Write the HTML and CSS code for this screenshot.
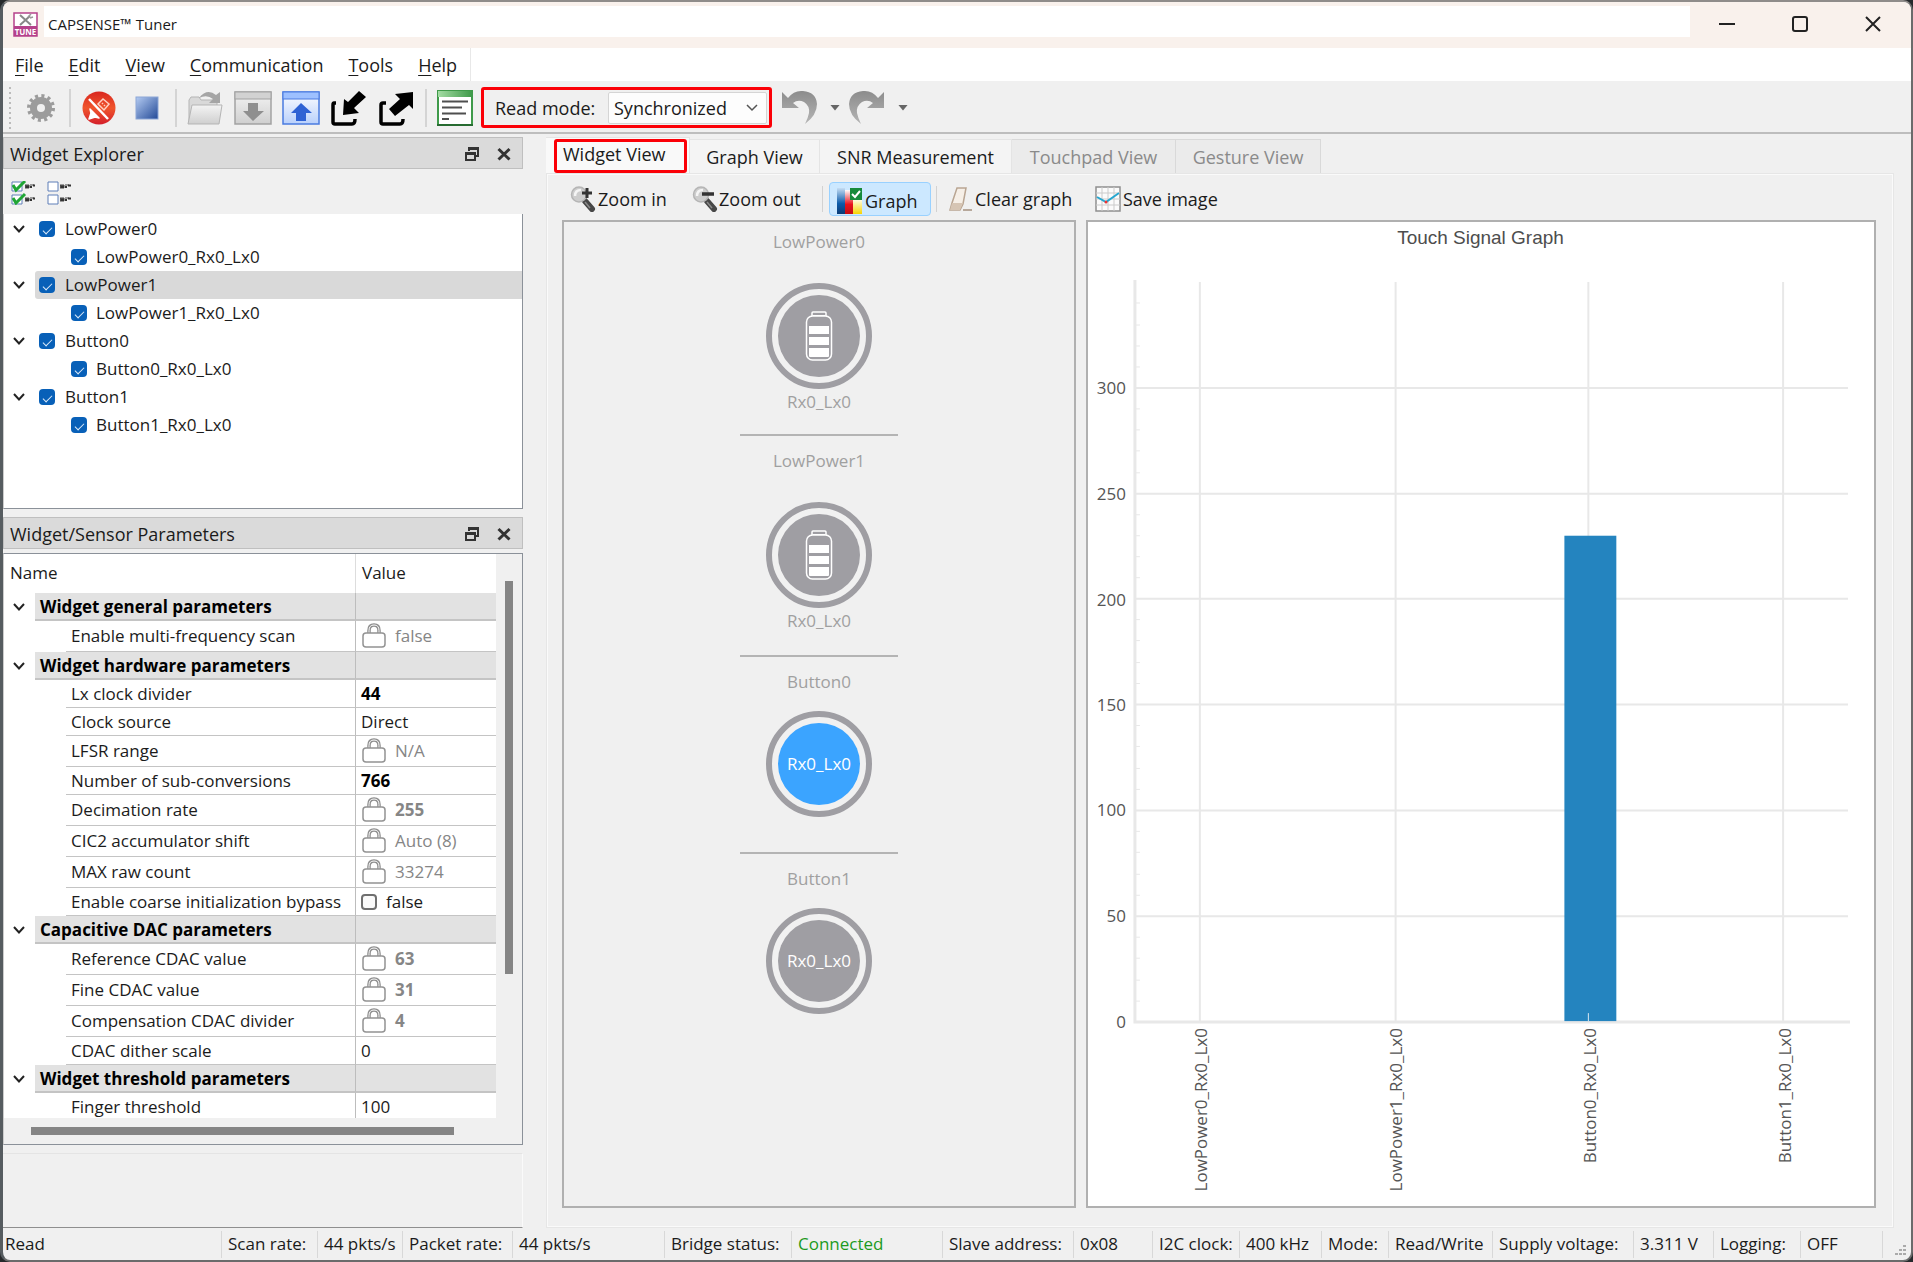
FILE: index.html
```html
<!DOCTYPE html>
<html lang="en">
<head>
<meta charset="utf-8">
<title>CAPSENSE™ Tuner</title>
<link rel="stylesheet" href="styles.css">
</head>
<body>
<svg class="defs" aria-hidden="true">
  <defs>
    <linearGradient id="g-red" x1="0" y1="0" x2="0" y2="1"><stop offset="0" stop-color="#d9261f"/><stop offset=".5" stop-color="#f0552c"/><stop offset="1" stop-color="#d41f2b"/></linearGradient>
    <linearGradient id="g-blue" x1="0" y1="0" x2="1" y2="1"><stop offset="0" stop-color="#b4cbf2"/><stop offset="1" stop-color="#234a97"/></linearGradient>
    <linearGradient id="g-win" x1="0" y1="0" x2="0" y2="1"><stop offset="0" stop-color="#fff"/><stop offset="1" stop-color="#b9d0fb"/></linearGradient>
    <linearGradient id="g-gray" x1="0" y1="0" x2="0" y2="1"><stop offset="0" stop-color="#f4f4f4"/><stop offset="1" stop-color="#cfcfcf"/></linearGradient>
    <linearGradient id="g-dark" x1="0" y1="0" x2="0" y2="1"><stop offset="0" stop-color="#8c8c8c"/><stop offset="1" stop-color="#b5b5b5"/></linearGradient>
    <linearGradient id="g-green" x1="0" y1="0" x2="1" y2="0"><stop offset="0" stop-color="#a3dca3"/><stop offset="1" stop-color="#3f9a4a"/></linearGradient>
    <linearGradient id="g-navy" x1="0" y1="0" x2="0" y2="1"><stop offset="0" stop-color="#c5ddf3"/><stop offset=".6" stop-color="#0b5aa9"/><stop offset="1" stop-color="#0a3a74"/></linearGradient>
    <linearGradient id="g-crimson" x1="0" y1="0" x2="0" y2="1"><stop offset="0" stop-color="#fff"/><stop offset=".6" stop-color="#e8121b"/><stop offset="1" stop-color="#c00d15"/></linearGradient>
    <linearGradient id="g-yellow" x1="0" y1="0" x2="0" y2="1"><stop offset="0" stop-color="#fffbe0"/><stop offset="1" stop-color="#f7d400"/></linearGradient>
    <symbol id="chev" viewBox="0 0 14 10"><path d="M2 2l5 5.500L12 2" fill="none" stroke="#222" stroke-width="2"/></symbol>
    <symbol id="lock" viewBox="0 0 24 26"><path d="M7 11V7.500Q7 2 12 2t5 5.500V11" fill="none" stroke="#8e8e8e" stroke-width="3.500"/><path d="M7 11V7.500Q7 2 12 2t5 5.500V11" fill="none" stroke="#fafafa" stroke-width="1"/><rect x="1" y="10" width="22" height="14" rx="3" fill="#fff" stroke="#939393" stroke-width="1.500"/></symbol>
    <symbol id="float" viewBox="0 0 16 16"><path d="M5 5V2h9v8h-3" fill="none" stroke="#333" stroke-width="2"/><path d="M4 2.500h11" stroke="#333" stroke-width="3"/><rect x="2" y="7" width="9" height="7" fill="none" stroke="#333" stroke-width="2"/><path d="M1 7.500h11" stroke="#333" stroke-width="3"/></symbol>
    <symbol id="close" viewBox="0 0 16 16"><path d="M2.500 3l11 10.500M13.500 3l-11 10.500" stroke="#333" stroke-width="3"/></symbol>
    <symbol id="battery" viewBox="0 0 28 50"><path d="M7 5V2q0-1 1-1h12q1 0 1 1v3" fill="none" stroke="#fff" stroke-width="1.500"/><path d="M8 4.500h12" stroke="#fff"/><rect x="1.500" y="5" width="25" height="44" rx="6" fill="none" stroke="#fff" stroke-width="1.500"/><path d="M4 15h20v8H4zM4 26h20v8H4zM4 37h20v8q0 1-1 1H5q-1 0-1-1z" fill="#fff"/></symbol>
    <symbol id="glass" viewBox="0 0 26 26"><path d="M15 15l7 8" stroke="#474747" stroke-width="6" stroke-linecap="round"/><path d="M15 16l5 6" stroke="#8a8a8a" stroke-width="1.500"/><circle cx="9" cy="8.500" r="7.500" fill="#cdcdcd" stroke="#b5b5b5" stroke-width="1.500"/><path d="M5 10q0-6 6-6" fill="none" stroke="#f4f4f4" stroke-width="2.500"/></symbol>
    <symbol id="undo" viewBox="0 0 36 36"><path d="M1 2v16h17l-6-5q5-4 11-1 6 4 5 11-1 5-4 11 12-9 12-20Q35 2 22 1 13 0 7 8z" fill="url(#g-dark)"/></symbol>
    <symbol id="items" viewBox="0 0 12 24"><path d="M0 5h4v3H0zM5 5h4M0 18h4v3H0zM5 18h4" fill="#555" stroke="#444" stroke-width="1"/><path d="M1 7h3m1 0h2m1-1.500h3M1 20h3m1 0h2m1-1.500h3" stroke="#333" stroke-width="2"/></symbol>
  </defs>
</svg>
<div class="window">
  <header class="titlebar">
    <svg class="app-icon" width="25" height="25" viewBox="0 0 25 25"><rect x="1" y="1" width="23" height="23" fill="#fff" stroke="#b5418b" stroke-width="1.500"/><rect x="1" y="14" width="23" height="10" fill="#b5418b"/><path d="M7 3l11 10M17 4L7 13" stroke="#888" stroke-width="2"/><path d="M15 5l3-3M17 6l3-1" stroke="#999" stroke-width="1.500"/><text x="12.500" y="23" text-anchor="middle" class="app-mark">TUNE</text></svg>
    <h1 class="title">CAPSENSE™ Tuner</h1>
    <div class="win-controls">
      <button aria-label="Minimize"><svg width="18" height="18"><path d="M1 9h16" stroke="#222" stroke-width="2"/></svg></button>
      <button aria-label="Maximize"><svg width="18" height="18"><rect x="2" y="2" width="14" height="14" rx="2" fill="none" stroke="#222" stroke-width="2"/></svg></button>
      <button aria-label="Close"><svg width="18" height="18"><path d="M2 2l14 14M16 2L2 16" stroke="#222" stroke-width="2"/></svg></button>
    </div>
  </header>
  <nav class="menubar">
    <button><u>F</u>ile</button><button><u>E</u>dit</button><button><u>V</u>iew</button><button><u>C</u>ommunication</button><button><u>T</u>ools</button><button><u>H</u>elp</button>
  </nav>
  <div class="toolbar">
    <span class="grip"></span>
    <button class="tool" aria-label="Settings"><svg width="30" height="30" viewBox="0 0 30 30"><circle cx="15" cy="15" r="7.500" fill="none" stroke="#9c9c9c" stroke-width="7"/><circle cx="15" cy="15" r="12" fill="none" stroke="#9c9c9c" stroke-width="4" stroke-dasharray="3 3.283"/></svg></button>
    <span class="sep"></span>
    <button class="tool" aria-label="Disconnect"><svg width="34" height="34" viewBox="0 0 34 34"><circle cx="17" cy="17" r="16.500" fill="url(#g-red)"/><path d="M8 18l9 9-4-1-3 1-3 1 1-3 1-3z" fill="#fff" stroke="#fff" stroke-width="1.500" stroke-linejoin="round"/><path d="M16 13l5-5 6 5-5 6z" fill="none" stroke="#ffcfc2" stroke-width="1.500"/><path d="M20 12l1 1M22 14l1 1" stroke="#ffcfc2" stroke-width="1.500"/><path d="M7 8l19 20" stroke="#fff" stroke-width="2.500"/></svg></button>
    <button class="tool" aria-label="Stop"><svg width="24" height="24"><rect x="1" y="1" width="22" height="22" fill="url(#g-blue)" stroke="#8ba6d6"/></svg></button>
    <span class="sep"></span>
    <button class="tool" aria-label="Open"><svg width="36" height="36" viewBox="0 0 36 36"><path d="M2 33V10l2-3h8l2 3h16v6" fill="#d9d9d9" stroke="#b5b5b5"/><path d="M1 34l4-19h30l-3 19z" fill="url(#g-gray)" stroke="#b5b5b5"/><path d="M12 8q8-10 17-3l4-3v11H22l4-4q-6-5-14-1z" fill="#a5a5a5"/></svg></button>
    <button class="tool" aria-label="Import"><svg width="38" height="34" viewBox="0 0 38 34"><rect x="1" y="1" width="36" height="32" fill="url(#g-gray)" stroke="#a2a2a2" stroke-width="1.500"/><rect x="1" y="1" width="36" height="7" fill="#d2d2d2" stroke="#a2a2a2"/><path d="M14 12h10v8h6L19 30 9 20h5z" fill="#8f8f8f"/></svg></button>
    <button class="tool" aria-label="Export"><svg width="38" height="34" viewBox="0 0 38 34"><rect x="1" y="1" width="36" height="32" fill="url(#g-win)" stroke="#4a7be0" stroke-width="1.500"/><rect x="1" y="1" width="36" height="7" fill="#9dc0ff" stroke="#4a7be0"/><path d="M14 30h10v-8h6L19 12 9 22h5z" fill="#2f62d4"/></svg></button>
    <button class="tool" aria-label="Read from device"><svg width="36" height="36" viewBox="0 0 36 36"><path d="M5 13H3q-1 0-1 2v17q0 2 2 2h17q3 0 3-5" fill="none" stroke="#000" stroke-width="3.500"/><path d="M28 1l7 6-12 11 5 5-16 2 1-16 4 3z" fill="#000"/></svg></button>
    <button class="tool" aria-label="Write to device"><svg width="36" height="36" viewBox="0 0 36 36"><path d="M7 13H4q-2 0-2 2v17q0 2 2 2h17q3 0 3-5" fill="none" stroke="#000" stroke-width="3.500"/><path d="M34 2v17l-4-4-14 11-6-7 11-10-5-5z" fill="#000"/></svg></button>
    <span class="sep"></span>
    <button class="tool" aria-label="Log"><svg width="36" height="36" viewBox="0 0 36 36"><rect x="1" y="1" width="34" height="34" fill="#fff" stroke="#3f9a4a" stroke-width="2"/><rect x="1" y="1" width="34" height="6" fill="url(#g-green)"/><path d="M5 11.500h26M5 17.500h20M5 23.500h24M5 29h7" stroke="#4f4f4f" stroke-width="2"/><path d="M0 35h36" stroke="#276b31" stroke-width="2"/></svg></button>
    <div class="readmode">
      <label for="mode">Read mode:</label>
      <div class="select"><select id="mode"><option>Synchronized</option></select><svg width="14" height="10" viewBox="0 0 14 10"><path d="M2 2l5 5 5-5" fill="none" stroke="#555" stroke-width="1.500"/></svg></div>
    </div>
    <button class="hist" aria-label="Undo"><svg width="36" height="36"><use href="#undo"/></svg></button>
    <button class="drop" aria-label="Undo list"></button>
    <button class="hist" aria-label="Redo"><svg width="36" height="36"><use href="#undo" transform="matrix(-1 0 0 1 36 0)"/></svg></button>
    <button class="drop" aria-label="Redo list"></button>
  </div>
  <div class="workspace">
    <aside class="docks">
      <section class="dock">
        <header class="dock-head"><h2>Widget Explorer</h2><button aria-label="Float"><svg width="16" height="16"><use href="#float"/></svg></button><button aria-label="Close panel"><svg width="16" height="16"><use href="#close"/></svg></button></header>
        <div class="checks">
          <button aria-label="Check all"><svg width="24" height="24" viewBox="0 0 24 24"><path d="M1 1h10v9H1zM1 14h10v9H1z" fill="#fff" stroke="#5f7fb8"/><path d="M2 4l3 5 9-9M2 17l3 5 9-9" fill="none" stroke="#1fa535" stroke-width="3"/><use href="#items" x="14" y="-1" width="12" height="24"/></svg></button>
          <button aria-label="Uncheck all"><svg width="24" height="24" viewBox="0 0 24 24"><path d="M1 1h10v9H1zM1 14h10v9H1z" fill="#fff" stroke="#5f7fb8"/><use href="#items" x="13" y="-1" width="12" height="24"/></svg></button>
        </div>
        <ul class="tree">
          <li><div class="node"><button aria-label="Collapse"><svg width="14" height="10"><use href="#chev"/></svg></button><label><input type="checkbox" checked>LowPower0</label></div><ul><li><label><input type="checkbox" checked>LowPower0_Rx0_Lx0</label></li></ul></li>
          <li><div class="node selected"><button aria-label="Collapse"><svg width="14" height="10"><use href="#chev"/></svg></button><label><input type="checkbox" checked>LowPower1</label></div><ul><li><label><input type="checkbox" checked>LowPower1_Rx0_Lx0</label></li></ul></li>
          <li><div class="node"><button aria-label="Collapse"><svg width="14" height="10"><use href="#chev"/></svg></button><label><input type="checkbox" checked>Button0</label></div><ul><li><label><input type="checkbox" checked>Button0_Rx0_Lx0</label></li></ul></li>
          <li><div class="node"><button aria-label="Collapse"><svg width="14" height="10"><use href="#chev"/></svg></button><label><input type="checkbox" checked>Button1</label></div><ul><li><label><input type="checkbox" checked>Button1_Rx0_Lx0</label></li></ul></li>
        </ul>
      </section>
      <section class="dock">
        <header class="dock-head"><h2>Widget/Sensor Parameters</h2><button aria-label="Float"><svg width="16" height="16"><use href="#float"/></svg></button><button aria-label="Close panel"><svg width="16" height="16"><use href="#close"/></svg></button></header>
        <div class="params">
          <div class="params-view">
            <table>
              <colgroup><col class="c-toggle"><col class="c-indent"><col><col class="c-value"></colgroup>
              <thead><tr><th colspan="3">Name</th><th>Value</th></tr></thead>
              <tbody>
                <tr class="group"><td><button aria-label="Collapse"><svg width="14" height="10"><use href="#chev"/></svg></button></td><th colspan="2">Widget general parameters</th><td></td></tr>
                <tr class="locked"><td></td><td></td><td>Enable multi-frequency scan</td><td><svg width="24" height="26"><use href="#lock"/></svg>false</td></tr>
                <tr class="group"><td><button aria-label="Collapse"><svg width="14" height="10"><use href="#chev"/></svg></button></td><th colspan="2">Widget hardware parameters</th><td></td></tr>
                <tr><td></td><td></td><td>Lx clock divider</td><td><b>44</b></td></tr>
                <tr><td></td><td></td><td>Clock source</td><td>Direct</td></tr>
                <tr class="locked"><td></td><td></td><td>LFSR range</td><td><svg width="24" height="26"><use href="#lock"/></svg>N/A</td></tr>
                <tr><td></td><td></td><td>Number of sub-conversions</td><td><b>766</b></td></tr>
                <tr class="locked"><td></td><td></td><td>Decimation rate</td><td><svg width="24" height="26"><use href="#lock"/></svg><b>255</b></td></tr>
                <tr class="locked"><td></td><td></td><td>CIC2 accumulator shift</td><td><svg width="24" height="26"><use href="#lock"/></svg>Auto (8)</td></tr>
                <tr class="locked"><td></td><td></td><td>MAX raw count</td><td><svg width="24" height="26"><use href="#lock"/></svg>33274</td></tr>
                <tr><td></td><td></td><td>Enable coarse initialization bypass</td><td><label><input type="checkbox">false</label></td></tr>
                <tr class="group"><td><button aria-label="Collapse"><svg width="14" height="10"><use href="#chev"/></svg></button></td><th colspan="2">Capacitive DAC parameters</th><td></td></tr>
                <tr class="locked"><td></td><td></td><td>Reference CDAC value</td><td><svg width="24" height="26"><use href="#lock"/></svg><b>63</b></td></tr>
                <tr class="locked"><td></td><td></td><td>Fine CDAC value</td><td><svg width="24" height="26"><use href="#lock"/></svg><b>31</b></td></tr>
                <tr class="locked"><td></td><td></td><td>Compensation CDAC divider</td><td><svg width="24" height="26"><use href="#lock"/></svg><b>4</b></td></tr>
                <tr><td></td><td></td><td>CDAC dither scale</td><td>0</td></tr>
                <tr class="group"><td><button aria-label="Collapse"><svg width="14" height="10"><use href="#chev"/></svg></button></td><th colspan="2">Widget threshold parameters</th><td></td></tr>
                <tr><td></td><td></td><td>Finger threshold</td><td>100</td></tr>
              </tbody>
            </table>
          </div>
          <div class="vscroll"><span></span></div>
          <div class="hscroll"><span></span></div>
        </div>
      </section>
      <div class="dock-rest"></div>
    </aside>
    <main class="views">
      <div class="tabs" role="tablist">
        <button role="tab" class="tab active" aria-selected="true"><span>Widget View</span></button>
        <button role="tab" class="tab graph-tab">Graph View</button>
        <button role="tab" class="tab snr-tab">SNR Measurement</button>
        <button role="tab" class="tab touch-tab" disabled>Touchpad View</button>
        <button role="tab" class="tab gesture-tab" disabled>Gesture View</button>
      </div>
      <div class="pane">
        <div class="viewbar">
          <button class="zin"><svg width="26" height="26" viewBox="0 0 26 26"><use href="#glass"/><path d="M12 7h10M17 2v10" stroke="#333" stroke-width="3"/></svg>Zoom in</button>
          <button class="zout"><svg width="26" height="26" viewBox="0 0 26 26"><use href="#glass"/><path d="M10 8h12" stroke="#333" stroke-width="3.500"/></svg>Zoom out</button>
          <span class="vsep"></span>
          <button class="toggle" aria-pressed="true"><svg width="26" height="26" viewBox="0 0 26 26"><rect width="8" height="26" fill="url(#g-navy)"/><rect x="8" y="2" width="8" height="24" fill="url(#g-crimson)"/><rect x="16" y="12" width="9" height="14" fill="url(#g-yellow)"/><rect x="13" width="12" height="12" fill="#178a3b"/><path d="M15 6l3 3 5-6" fill="none" stroke="#fff" stroke-width="2"/></svg>Graph</button>
          <span class="vsep"></span>
          <button class="clear"><svg width="25" height="26" viewBox="0 0 25 26"><path d="M9 2h9l-3 16-3 6H2l2-7z" fill="#f6efe7" stroke="#b9a592" stroke-width="1.500"/><path d="M4 17h11l-3 7H2z" fill="#d6c5b4"/><path d="M15 24h9" stroke="#a5917f" stroke-width="1.500"/></svg>Clear graph</button>
          <button class="save"><svg width="26" height="26" viewBox="0 0 26 26"><rect x="1" y="1" width="24" height="24" fill="#fbfbfb" stroke="#8f8f8f" stroke-width="1.500"/><path d="M7 1v24M13 1v24M19 1v24M1 7h24M1 13h24M1 19h24" stroke="#cbcbcb"/><path d="M2 11l9 5 13-9" fill="none" stroke="#25a6cf" stroke-width="2"/><circle cx="11" cy="16" r="1.500" fill="#e33"/></svg>Save image</button>
        </div>
        <div class="panels">
          <section class="sensors">
            <article class="widget lp"><h3>LowPower0</h3><div class="ring"><div class="disc"><svg width="28" height="50"><use href="#battery"/></svg></div></div><p>Rx0_Lx0</p></article>
            <article class="widget lp"><h3>LowPower1</h3><div class="ring"><div class="disc"><svg width="28" height="50"><use href="#battery"/></svg></div></div><p>Rx0_Lx0</p></article>
            <article class="widget"><h3>Button0</h3><div class="ring"><div class="disc on">Rx0_Lx0</div></div></article>
            <article class="widget"><h3>Button1</h3><div class="ring"><div class="disc">Rx0_Lx0</div></div></article>
          </section>
          <section class="chart">
            <svg viewBox="1088 222 787 983" role="img" aria-label="Touch Signal Graph">
              <text class="chart-title" x="1481" y="243" text-anchor="middle">Touch Signal Graph</text>
              <g stroke="#e8e8e8" fill="none" stroke-width="2">
                <path d="M1200 281V1022M1396 281V1022M1589 281V1022M1784 281V1022"/>
                <path d="M1135 387H1849M1135 493H1849M1135 598H1849M1135 704H1849M1135 810H1849M1135 916H1849"/>
                <path d="M1135 302h5M1135 324h5M1135 345h5M1135 366h5M1135 408h5M1135 429h5M1135 450h5M1135 472h5M1135 514h5M1135 535h5M1135 556h5M1135 577h5M1135 619h5M1135 640h5M1135 662h5M1135 683h5M1135 725h5M1135 746h5M1135 768h5M1135 789h5M1135 831h5M1135 852h5M1135 874h5M1135 895h5M1135 937h5M1135 958h5M1135 980h5M1135 1001h5" stroke-width="1"/>
                <path d="M1135 279V1022H1851" stroke-width="3"/>
              </g>
              <rect x="1565" y="535" width="52" height="486" fill="#2484bf"/>
              <path d="M1589 1013v8" stroke="#d8e8f3"/>
              <g class="axis" text-anchor="end">
                <text x="1126" y="393">300</text><text x="1126" y="499">250</text><text x="1126" y="605">200</text><text x="1126" y="710">150</text><text x="1126" y="816">100</text><text x="1126" y="922">50</text><text x="1126" y="1028">0</text>
                <text transform="translate(1207 1028) rotate(-90)">LowPower0_Rx0_Lx0</text>
                <text transform="translate(1402 1028) rotate(-90)">LowPower1_Rx0_Lx0</text>
                <text transform="translate(1597 1028) rotate(-90)">Button0_Rx0_Lx0</text>
                <text transform="translate(1792 1028) rotate(-90)">Button1_Rx0_Lx0</text>
              </g>
            </svg>
          </section>
        </div>
      </div>
    </main>
  </div>
  <footer class="status">
    <span>Read</span><span>Scan rate:</span><span>44 pkts/s</span><span>Packet rate:</span><span>44 pkts/s</span><span>Bridge status:</span><span class="ok">Connected</span><span>Slave address:</span><span>0x08</span><span>I2C clock:</span><span>400 kHz</span><span>Mode:</span><span>Read/Write</span><span>Supply voltage:</span><span>3.311 V</span><span>Logging:</span><span>OFF</span><span><svg class="size-grip" width="12" height="12"><path d="M8 1h3M4 5h3M8 5h3M0 9h3M4 9h3M8 9h3" stroke="#aaa" stroke-width="2"/></svg></span>
  </footer>
</div>
</body>
</html>
```
FILE: styles.css
```css
* { box-sizing: border-box; }
body { margin: 0; background: #26292b; color: #1b1b1b; font: 17px/24px "Open Sans", "Noto Sans", sans-serif; }
h1, h2, h3, p, ul { margin: 0; padding: 0; font-size: inherit; font-weight: 400; list-style: none; }
button, select, input { font: inherit; color: inherit; margin: 0; }
button { border: 0; padding: 0; background: none; white-space: nowrap; }
svg { display: block; flex: none; }
.defs { position: absolute; width: 0; height: 0; }

.window { min-height: 100vh; display: flex; flex-direction: column; background: #f0f0f0; border: 2px solid #6b6b6b; border-top-color: #8f8c8a; border-left: 3px solid #565c60; border-radius: 10px; overflow: hidden; }

.titlebar { flex: none; display: flex; align-items: flex-start; height: 46px; padding: 0 2px 0 10px; background: #f9f1ec; }
.app-icon { margin-top: 10px; }
.app-mark { font: bold 8px "Open Sans", sans-serif; fill: #fff; }
.title { flex: 1; height: 31px; margin: 4px 0 0 6px; padding-left: 4px; background: #fff; font-size: 15px; line-height: 37px; }
.win-controls { display: flex; }
.win-controls button { width: 73px; height: 43px; display: grid; place-items: center; }

.menubar { flex: none; display: flex; height: 33px; background: #fff; font-size: 18px; }
.menubar button { padding: 0 13px 0 12px; }
.menubar button:last-child { border-right: 1px solid #e8e8e8; }
.menubar u { text-underline-offset: 3px; }

.toolbar { flex: none; display: flex; align-items: center; height: 53px; padding: 4px 0 2px 6px; border-bottom: 2px solid #bdbdbd; font-size: 18px; }
.grip { width: 2px; height: 42px; margin-right: 6px; background: repeating-linear-gradient(#bbb 0 2px, #f0f0f0 2px 5px); }
.tool { width: 48px; height: 40px; display: grid; place-items: center; }
.sep { width: 2px; height: 38px; margin: 0 4px; background: #d4d4d4; }
.readmode { display: flex; align-items: center; width: 291px; height: 41px; margin-left: 2px; padding: 0 2px 0 11px; border: 3px solid #fb0007; border-radius: 3px; }
.readmode label { flex: 1; white-space: nowrap; }
.select { position: relative; width: 159px; height: 32px; }
.select select { width: 100%; height: 100%; padding: 0 5px; appearance: none; background: #fdfdfd; border: 1px solid #d5d5d5; border-radius: 2px; }
.select svg { position: absolute; right: 8px; top: 11px; pointer-events: none; }
.hist { margin-left: 9px; }
.drop { width: 10px; height: 6px; margin-left: 13px; background: #666; clip-path: polygon(0 0, 100% 0, 50% 100%); }

.workspace { flex: 1; display: flex; }
.docks { flex: none; width: 520px; display: flex; flex-direction: column; gap: 8px; padding-top: 3px; }
.dock-head { display: flex; align-items: center; gap: 16px; height: 32px; padding: 1px 10px 0 6px; background: #dadada; border: 1px solid #bfbfbf; font-size: 18px; }
.dock-head h2 { flex: 1; }
.checks { display: flex; gap: 12px; height: 45px; padding: 12px 8px; }
.tree { height: 295px; background: #fff; border: 1px solid #8b9199; border-top: 0; border-left-color: #ccc; padding-top: 1px; }
.node { display: flex; height: 28px; padding-left: 8px; }
.node button { width: 14px; }
.node label { flex: 1; display: flex; align-items: center; gap: 10px; margin-left: 9px; padding-left: 4px; }
.node.selected label { background: #d9d9d9; border-radius: 3px 0 0 3px; }
.tree ul label { display: flex; align-items: center; gap: 9px; height: 28px; padding-left: 67px; }
input[type="checkbox"] { appearance: none; flex: none; width: 16px; height: 16px; border: 2px solid #6f6f6f; border-radius: 4px; background: #fafafa; }
input[type="checkbox"]:checked { border: 0; background: #0860b8; display: grid; place-items: center; }
input[type="checkbox"]:checked::after { content: ""; width: 8px; height: 4px; border: solid #dceaf8; border-width: 0 0 1px 1px; transform: rotate(-45deg); }
.node button, td button { display: grid; place-items: center; }

.params { display: grid; grid-template: 564px 26px / 1fr 26px; margin-top: 4px; border: 1px solid #8b9199; border-left-color: #ccc; }
.params-view { overflow: hidden; background: #fff; }
table { width: 100%; table-layout: fixed; border-collapse: separate; border-spacing: 0; }
.c-toggle { width: 31px; } .c-indent { width: 31px; } .c-value { width: 141px; }
th, td { padding: 0; height: 28px; text-align: left; font-weight: 400; white-space: nowrap; }
thead th { height: 39px; padding: 0 0 2px 6px; }
thead th + th { border-left: 1px solid #ddd; }
tbody td:nth-last-child(-n+2), tbody th { border-bottom: 1px solid #c4c4c4; padding-left: 5px; }
tbody td:last-child { border-left: 1px solid #bdbdbd; }
tbody td:first-child { padding-left: 8px; border: 0; }
.group th, .group td:last-child { background: #e2e2e2; border-bottom: 2px solid #c4c4c4; font-weight: 700; color: #000; }
.group th { padding-top: 2px; }
b { color: #000; }
.locked td { height: 31px; }
.locked td:last-child, .locked b { color: #868686; }
.locked svg { float: left; margin: -1px 9px 0 1px; }
td label { display: flex; align-items: center; gap: 9px; }
.vscroll { padding: 27px 9px 0 9px; }
.vscroll span { display: block; height: 393px; background: #858585; }
.hscroll { padding: 9px 42px 0 27px; }
.hscroll span { display: block; height: 8px; background: #858585; }
.dock-rest { flex: 1; border-top: 1px solid #e4e4e4; border-right: 1px solid #fafafa; border-bottom: 1px solid #8f8f8f; }

.views { flex: 1; min-width: 0; display: flex; flex-direction: column; padding: 3px 17px 0 23px; }
.tabs { display: flex; align-items: flex-end; height: 36px; font-size: 18px; }
.tab { height: 34px; padding: 0; background: #f4f4f4; border: 1px solid #e4e4e4; border-width: 1px 1px 0 0; line-height: 30px; }
.tab.active { width: 144px; height: 36px; background: #f9f9f9; padding: 1px 2px 0 8px; }
.tab.active span { display: block; height: 34px; padding-left: 6px; line-height: 24px; text-align: left; border: 3px solid #fb0007; border-radius: 3px; }
.graph-tab { width: 130px; } .snr-tab { width: 192px; } .touch-tab { width: 164px; } .gesture-tab { width: 145px; }
.tab:disabled { background: #ebebeb; color: #8a8a8a; border-color: #d9d9d9; }
.pane { flex: 1; display: flex; flex-direction: column; padding: 0 16px 18px 14px; border: 2px solid #fafafa; outline: 1px solid #e6e6e6; outline-offset: -1px; }
.viewbar { display: flex; align-items: center; height: 45px; padding: 3px 0 0 8px; font-size: 18px; }
.viewbar button { display: flex; align-items: center; gap: 2px; height: 34px; }
.vsep { width: 1px; height: 26px; background: #d2d2d2; }
.viewbar .zin { width: 122px; } .viewbar .zout { width: 130px; gap: 1px; }
.viewbar .toggle { width: 102px; margin: 0 5px 0 6px; padding: 3px 0 0 7px; background: #cce8ff; border: 1px solid #99d1ff; border-radius: 4px; }
.clear { width: 147px; margin-left: 11px; }
.panels { flex: 1; display: grid; grid-template-columns: 514fr 790fr; gap: 10px; }
.sensors, .chart { border: 2px solid #b0b0b0; min-width: 0; }
.sensors { padding-top: 8px; color: #a0a0a0; text-align: center; }
.widget { width: 158px; height: 197px; margin: 0 auto; border-bottom: 2px solid #b4b4b4; padding-top: 1px; }
.widget h3 { margin: 12px 0 17px; }
.widget p { margin-top: 1px; }
.widget.lp { height: 221px; }
.widget.lp h3 { margin-bottom: 29px; }
.widget:first-child { height: 205px; padding-top: 0; }
.widget:first-child h3 { margin-top: 0; }
.widget.lp:first-child { height: 206px; }
.widget:last-child { border: 0; }
.ring { width: 106px; height: 106px; margin: 0 auto; padding: 6px; border: 6px solid #9f9ea3; border-radius: 50%; background: #f1f1f1; }
.disc { display: grid; place-items: center; width: 82px; height: 82px; border-radius: 50%; background: #9f9ea3; color: #fff; white-space: nowrap; }
.disc.on { background: #3ba4ff; }
.chart { display: flex; background: #fff; }
.chart svg { width: 100%; height: 0; min-height: 100%; }
.chart-title { font: 19px "Liberation Sans", Arial, sans-serif; fill: #4d4d4d; }
.axis { fill: #555; }

.status { flex: none; height: 32px; display: grid; white-space: nowrap; grid-template-columns: 218fr 96fr 85fr 110fr 152fr 127fr 151fr 131fr 79fr 87fr 82fr 67fr 104fr 141fr 80fr 87fr 82fr 29fr; padding-top: 3px; }
.status span { min-width: 0; height: 27px; padding: 1px 0 0 6px; border-left: 1px solid #d8d8d8; }
.status span:first-child { padding-left: 2px; border: 0; }
.status .ok { color: #1d9a1d; }
.size-grip { margin: 13px 0 0 6px; }
```
